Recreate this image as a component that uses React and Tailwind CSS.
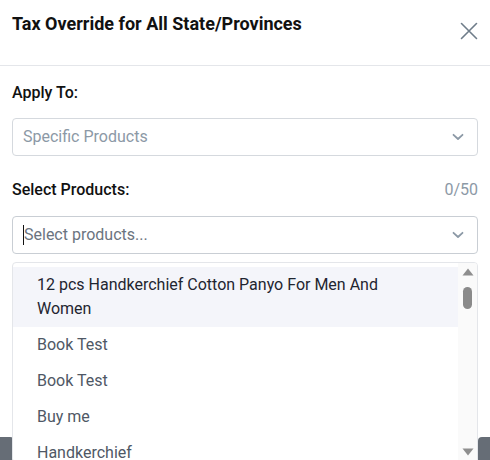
import React from "react";

const Chevron = () => (
  <svg width="12" height="8" viewBox="0 0 12 8" fill="none" className="shrink-0">
    <path d="M1.5 1.8 L6 6 L10.5 1.8" stroke="#8c99a6" strokeWidth="1.8" strokeLinecap="round" strokeLinejoin="round" />
  </svg>
);

const items = [
  { label: "12 pcs Handkerchief Cotton Panyo For Men And Women", active: true },
  { label: "Book Test" },
  { label: "Book Test" },
  { label: "Buy me" },
  { label: "Handkerchief" },
  { label: "Handkerchief Set" },
];

export default function App() {
  return (
    <div className="relative w-[490px] h-[460px] overflow-hidden bg-white" style={{ fontFamily: "Roboto, 'Liberation Sans', sans-serif" }}>
      <div className="flex items-start justify-between h-[66px] border-b border-[#e4e6ea] pl-[12px] pr-[12px]">
        <div className="pt-[12px] text-[18px] leading-[24px] font-bold text-[#111]">Tax Override for All State/Provinces</div>
        <button className="mt-[22px] w-[18px] h-[18px] flex items-center justify-center">
          <svg width="18" height="18" viewBox="0 0 18 18" fill="none">
            <path d="M1.5 1.5 L16.5 16.5 M16.5 1.5 L1.5 16.5" stroke="#6f7d8a" strokeWidth="1.6" strokeLinecap="round" />
          </svg>
        </button>
      </div>

      <div className="px-[12px]">
        <div className="mt-[17px] text-[16px] leading-[20px] font-medium text-[#111]">Apply To:</div>
        <div className="mt-[15px] h-[38px] border border-[#d5d9de] rounded-[4px] flex items-center justify-between pl-[10px] pr-[13px]">
          <span className="text-[16px] text-[#8c99a6]">Specific Products</span>
          <Chevron />
        </div>

        <div className="mt-[24px] flex items-center justify-between h-[20px]">
          <span className="text-[16px] font-medium text-[#111]">Select Products:</span>
          <span className="text-[16px] text-[#8c99a6]">0/50</span>
        </div>

        <div className="relative mt-[16px]">
          <div className="h-[38px] border border-[#c9ced4] rounded-[4px] flex items-center justify-between pl-[10px] pr-[13px]">
            <span className="flex items-center text-[16px] text-[#6b7480]">
              <span className="w-[1px] h-[20px] bg-[#111]"></span>
              Select products...
            </span>
            <Chevron />
          </div>

          <div className="absolute left-0 right-0 top-[46px] z-10 h-[201px] bg-white border border-[#e4e6ea] rounded-[4px] flex overflow-hidden">
            <div className="flex-1 pt-[4px]">
              {items.map((it, i) => (
                <div
                  key={i}
                  className={`pl-[24px] pr-[60px] py-[6px] text-[16px] leading-[24px] ${it.active ? "bg-[#f4f5fa] text-[#1f2530]" : "text-[#4f5865]"}`}
                >
                  {it.label}
                </div>
              ))}
            </div>
            <div className="w-[19px] bg-[#fafafa] flex flex-col items-center pt-[4px]">
              <svg width="12" height="8" viewBox="0 0 12 8" className="mt-[1px]">
                <path d="M6 0.5 L11.5 7.5 L0.5 7.5 Z" fill="#8e8e8e" />
              </svg>
              <div className="mt-[11px] w-[9px] h-[22px] rounded-full bg-[#8a8a8a]"></div>
              <div className="flex-1"></div>
              <svg width="12" height="8" viewBox="0 0 12 8" className="mb-[6px]">
                <path d="M0.5 0.5 L11.5 0.5 L6 7.5 Z" fill="#8e8e8e" />
              </svg>
            </div>
          </div>
        </div>
      </div>

      <div className="absolute left-0 right-0 top-[437px] flex justify-between">
        <div className="w-[14px] h-[30px] bg-[#666d76] rounded-tr-[4px]"></div>
        <div className="w-[12px] h-[30px] bg-[#666d76] rounded-tl-[4px]"></div>
      </div>
    </div>
  );
}
